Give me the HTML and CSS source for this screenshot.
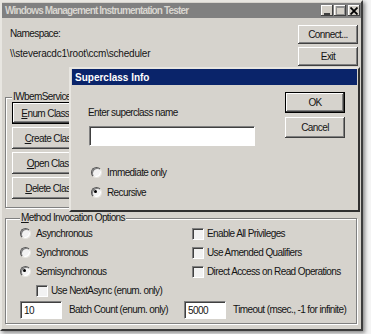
FILE: index.html
```html
<!DOCTYPE html>
<html lang="en">
<head>
    <meta charset="UTF-8">
    <title>Windows Management Instrumentation Tester</title>
    <link rel="stylesheet" href="styles.css">
</head>
<body>
    <div class="window">
        <div class="titlebar">
            <span class="title">Windows Management Instrumentation Tester</span>
            <div class="caption-btns">
                <span class="cap-btn"><svg width="8" height="8" viewBox="0 0 8 8"><rect x="1" y="6" width="6" height="2" fill="#404040"/></svg></span>
                <span class="cap-btn"><svg width="9" height="9" viewBox="0 0 9 9"><rect x="0.5" y="0.5" width="8" height="8" fill="none" stroke="#909090"/><rect x="0" y="0" width="9" height="2" fill="#909090"/></svg></span>
                <span class="cap-btn close"><svg width="8" height="8" viewBox="0 0 8 8"><path d="M0.5 0.5 L7.5 7.5 M7.5 0.5 L0.5 7.5" stroke="#000" stroke-width="1.8"/></svg></span>
            </div>
        </div>

        <div class="client">
            <div class="top-row">
                <div class="namespace">
                    <div>Namespace:</div>
                    <div class="ns-path">\\steveracdc1\root\ccm\scheduler</div>
                </div>
                <div class="top-btns">
                    <button class="btn">Connect...</button>
                    <button class="btn">Exit</button>
                </div>
            </div>

            <fieldset class="group svc">
                <legend>IWbemServices</legend>
                <div class="svc-btns">
                    <button class="btn default"><u>E</u>num Classes</button>
                    <button class="btn"><u>C</u>reate Class</button>
                    <button class="btn"><u>O</u>pen Class</button>
                    <button class="btn"><u>D</u>elete Class</button>
                </div>
            </fieldset>

            <fieldset class="group opts">
                <legend><u>M</u>ethod Invocation Options</legend>
                <div class="opts-grid">
                    <div class="opt"><span class="radio"></span>Asynchronous</div>
                    <div class="opt right"><span class="check"></span>Enable All Privileges</div>
                    <div class="opt"><span class="radio"></span>Synchronous</div>
                    <div class="opt right"><span class="check"></span>Use Amended Qualifiers</div>
                    <div class="opt"><span class="radio on"></span>Semisynchronous</div>
                    <div class="opt right"><span class="check"></span>Direct Access on Read Operations</div>
                    <div class="opt sub"><span class="check"></span>Use NextAsync (enum. only)</div>
                    <div class="opt"></div>
                    <div class="opt"><span class="edit">10</span>Batch Count (enum. only)</div>
                    <div class="opt"><span class="edit">5000</span>Timeout (msec., -1 for infinite)</div>
                </div>
            </fieldset>
        </div>

        <div class="dialog">
            <div class="dlg-title">Superclass Info</div>
            <div class="dlg-body">
                <div class="dlg-main">
                    <div class="dlg-label">Enter superclass name</div>
                    <div class="dlg-input"></div>
                    <div class="dlg-radios">
                        <div class="opt"><span class="radio"></span>Immediate only</div>
                        <div class="opt"><span class="radio on"></span>Recursive</div>
                    </div>
                </div>
                <div class="dlg-btns">
                    <button class="btn default">OK</button>
                    <button class="btn">Cancel</button>
                </div>
            </div>
        </div>
    </div>
</body>
</html>
```

FILE: styles.css
```css
* { margin: 0; padding: 0; box-sizing: border-box; }
body { width: 371px; height: 334px; overflow: hidden; background: #f4f4f4; font-family: "Liberation Sans", Arial, sans-serif; font-size: 10px; letter-spacing: -0.6px; line-height: 13px; color: #141414; }
u { text-decoration: underline; text-underline-offset: 1px; }

.window { position: relative; width: 363px; height: 331px; background: #d6d3cd; border: 2px solid; border-color: #e8e6e1 #3c3c3c #3c3c3c #e8e6e1; box-shadow: 2px 2px 4px rgba(0, 0, 0, 0.45); }
.titlebar { height: 15px; margin: 1px 0 0 0; background: #808080; display: flex; align-items: center; justify-content: space-between; padding: 0 1px 0 3px; }
.title { color: #d8d6d0; font-weight: bold; letter-spacing: -0.85px; }
.caption-btns { display: flex; gap: 1px; }
.cap-btn { width: 12px; height: 11px; background: #d4d0c8; display: flex; align-items: center; justify-content: center; box-shadow: inset -1px -1px #404040, inset 1px 1px #fff; }
.cap-btn.close { margin-left: 1px; }

.client { padding: 0 4px 0 3px; }
.top-row { display: flex; justify-content: space-between; height: 50px; }
.namespace { padding: 9px 0 0 5px; display: flex; flex-direction: column; gap: 7px; }
.ns-path { letter-spacing: -0.2px; }
.top-btns { display: flex; flex-direction: column; gap: 3px; margin-top: 7px; margin-right: -1px; }
.top-btns .btn { width: 60px; height: 19px; }

.btn { font: inherit; letter-spacing: inherit; color: inherit; background: #d6d3cd; border: none; box-shadow: inset -1px -1px #404040, inset 1px 1px #fff, inset -2px -2px #808080; display: flex; align-items: center; justify-content: center; white-space: nowrap; overflow: hidden; }
.btn.default { box-shadow: inset 0 0 0 1px #000, inset -2px -2px #404040, inset 2px 2px #fff, inset -3px -3px #808080; }

.group { border: 1px solid #808080; box-shadow: inset 1px 1px #fff, 1px 1px #fff; padding: 0 6px; }
.group legend { padding: 0 1px; line-height: 12px; background: #d6d3cd; }
.svc { width: 285px; margin-top: 23px; padding-bottom: 8px; }
.svc-btns { display: flex; flex-direction: column; gap: 3px; margin-top: -1px; }
.svc-btns .btn { width: 76px; height: 22px; }

.opts { margin-top: 4px; padding: 0 0 4px 14px; }
.opts-grid { display: grid; grid-template-columns: 164px 1fr; grid-auto-rows: 19px; }
.opt { display: flex; align-items: center; gap: 5px; white-space: nowrap; }
.opt.right { padding-left: 8px; gap: 3px; }
.opt.sub { padding-left: 16px; gap: 3px; }

.radio { width: 11px; height: 11px; border-radius: 50%; background: #f2f2f2; box-shadow: inset 1px 1px #808080, inset -1px -1px #fff; border: 1px solid; border-color: #555 #e8e6e1 #e8e6e1 #555; position: relative; flex: none; }
.radio.on::after { content: ""; position: absolute; left: 2px; top: 2px; width: 3px; height: 3px; border-radius: 50%; background: #000; }
.check { width: 12px; height: 12px; background: #f2f2f2; border: 1px solid; border-color: #808080 #fff #fff #808080; box-shadow: inset 1px 1px #404040; flex: none; }
.edit { width: 42px; height: 18px; background: #fff; border: 1px solid; border-color: #808080 #fff #fff #808080; box-shadow: inset 1px 1px #404040; padding: 2px 0 0 3px; margin-right: 2px; flex: none; }

.dialog { position: absolute; left: 67px; top: 65px; width: 291px; height: 145px; background: #d6d3cd; border: 2px solid; border-color: #e8e6e1 #303030 #303030 #e8e6e1; }
.dlg-title { height: 16px; margin: 0 1px; background: #0a246a; color: #fff; font-weight: bold; letter-spacing: 0; padding: 2px 0 0 3px; }
.dlg-body { display: flex; justify-content: space-between; padding: 0 13px 0 17px; }
.dlg-main { padding-top: 21px; }
.dlg-input { width: 166px; height: 20px; margin: 7px 0 0 1px; background: #fff; border: 1px solid; border-color: #808080 #fff #fff #808080; box-shadow: inset 1px 1px #404040; }
.dlg-radios { margin: 16px 0 0 3px; display: grid; grid-auto-rows: 20px; }
.dlg-btns { display: flex; flex-direction: column; gap: 4px; padding-top: 7px; }
.dlg-btns .btn { width: 60px; height: 21px; }
```
